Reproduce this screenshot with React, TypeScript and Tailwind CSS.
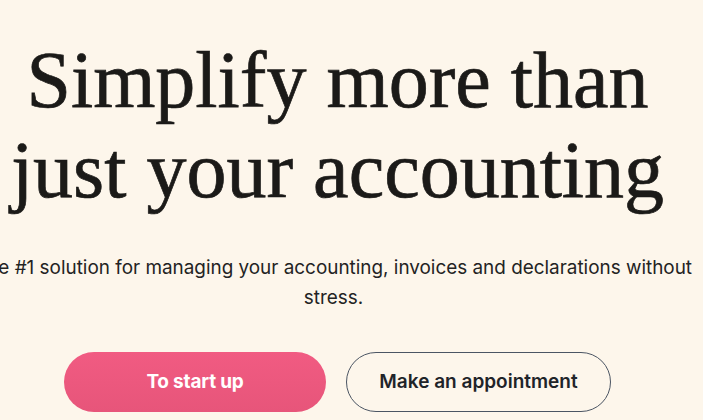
export default function App() {
  return (
    <div className="h-[420px] w-[703px] overflow-hidden bg-[#fdf6eb]">
      <div className="flex w-[675px] flex-col items-center pt-[35px]">
        <h1
          className="whitespace-nowrap text-center text-[80px] leading-[90px] text-[#1b1a18] [-webkit-text-stroke:0.7px_#1b1a18]"
          style={{ fontFamily: '"Liberation Serif", serif' }}
        >
          Simplify more than
          <br />
          just your accounting
        </h1>

        <p
          className="mt-[38px] w-[760px] shrink-0 pr-[8px] text-center text-[18.9px] leading-[30px] text-[#232323]"
          style={{ fontFamily: 'Inter, sans-serif' }}
        >
          The #1 solution for managing your accounting, invoices and declarations without stress.
        </p>

        <div className="mt-[39px] flex gap-[20px]" style={{ fontFamily: 'Inter, sans-serif' }}>
          <button className="h-[60px] w-[262px] rounded-full bg-gradient-to-b from-[#f15b82] to-[#e7557a] text-[19px] font-bold tracking-[-0.2px] text-white">
            To start up
          </button>
          <button className="h-[60px] w-[265px] rounded-full border border-[#4b5563] text-[19px] font-semibold text-[#1f2429]">
            Make an appointment
          </button>
        </div>
      </div>
    </div>
  );
}
